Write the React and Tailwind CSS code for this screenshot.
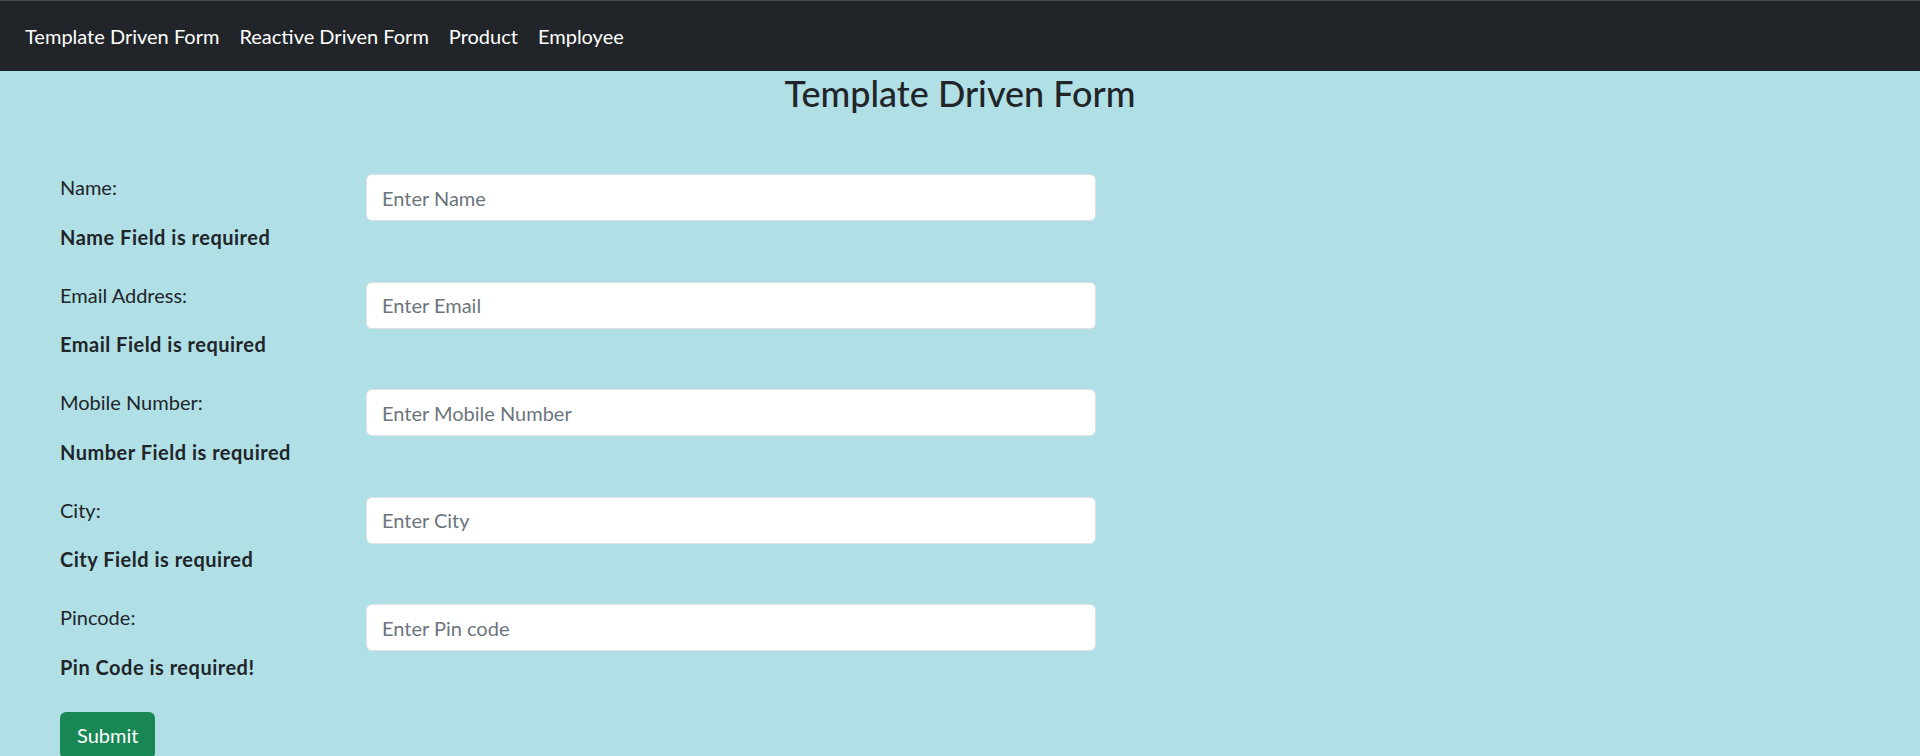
const FONT = "font-['Lato','Noto_Sans',sans-serif]"

const fields = [
  { label: 'Name:', placeholder: 'Enter Name', error: 'Name Field is required' },
  { label: 'Email Address:', placeholder: 'Enter Email', error: 'Email Field is required' },
  { label: 'Mobile Number:', placeholder: 'Enter Mobile Number', error: 'Number Field is required' },
  { label: 'City:', placeholder: 'Enter City', error: 'City Field is required' },
  { label: 'Pincode:', placeholder: 'Enter Pin code', error: 'Pin Code is required!' },
]

const links = ['Template Driven Form', 'Reactive Driven Form', 'Product', 'Employee']

export default function App() {
  return (
    <div className={`${FONT} min-h-[756px] bg-[#b0e0e6] text-[20px] leading-[30px] text-[#212529]`}>
      <nav className="flex h-[71px] items-center border-t border-[#4b4b4b] bg-[#212529] pl-[15px]">
        {links.map((l) => (
          <a key={l} href="#" className="px-[10px] text-[20px] text-white">
            {l}
          </a>
        ))}
      </nav>

      <h2 className="text-center text-[36px] font-medium leading-[44px]">Template Driven Form</h2>

      <form className="mt-[59px] px-[60px]" onSubmit={(e) => e.preventDefault()}>
        {fields.map((f) => (
          <div key={f.label} className="pb-[30px]">
            <div className="flex h-[47.5px] items-start">
              <label className="-mt-[2px] w-[306px]">{f.label}</label>
              <input
                type="text"
                placeholder={f.placeholder}
                className="h-[47px] w-[730px] rounded-[6px] border border-[#dee2e6] bg-white px-[15px] text-[20px] text-[#212529] placeholder:text-[#6c757d] outline-none"
              />
            </div>
            <p className="font-bold tracking-[0.5px]">{f.error}</p>
          </div>
        ))}
        <button
          type="submit"
          className="h-[47px] rounded-[6px] bg-[#198754] px-[17px] text-[20px] text-white"
        >
          Submit
        </button>
      </form>
    </div>
  )
}
